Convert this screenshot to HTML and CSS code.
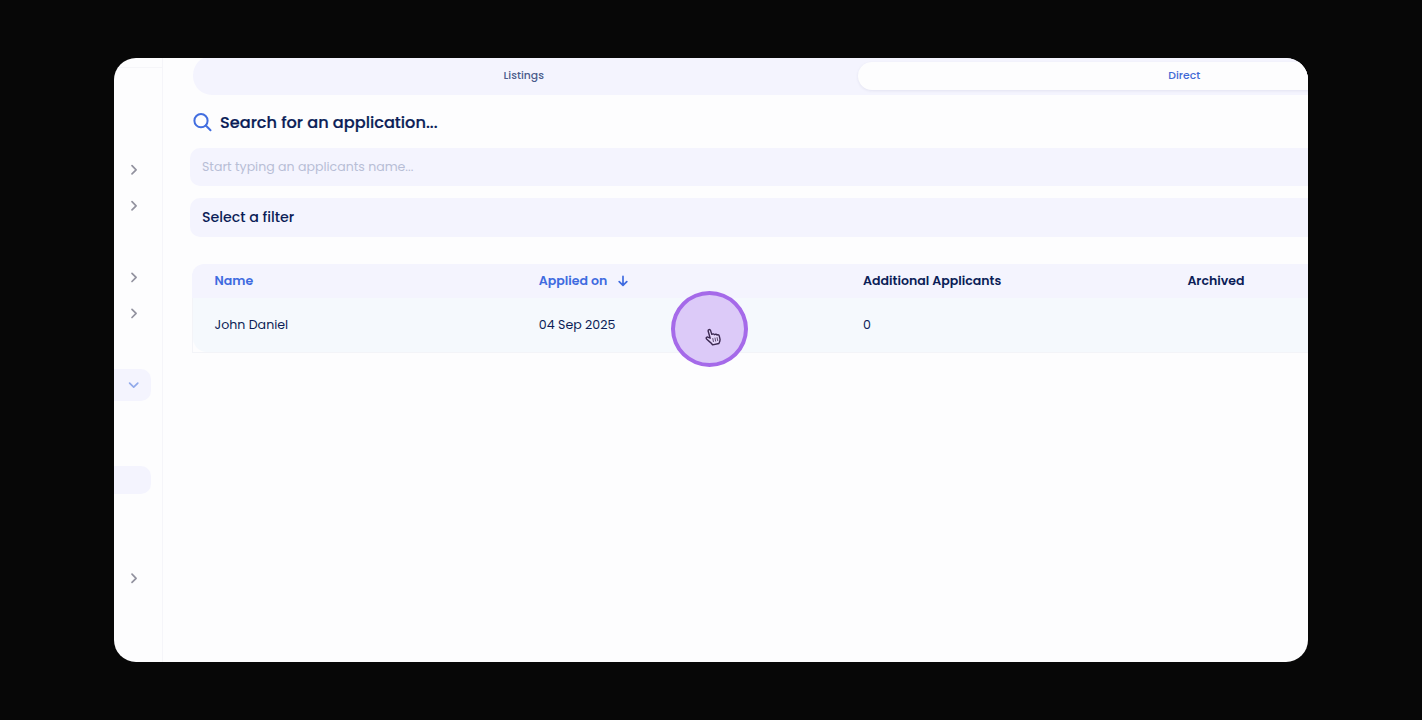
FILE: index.html
```html
<!DOCTYPE html>
<html lang="en">
<head>
  <meta charset="UTF-8">
  <title>Applications</title>
  <link rel="stylesheet" href="styles.css">
</head>
<body>
  <div class="window">
    <nav class="sidebar">
      <div class="side-top"></div>
      <div class="side-item"><svg class="chevron" viewBox="0 0 12 12"><path d="M4 1.7 8.1 5.8 4 9.9"/></svg></div>
      <div class="side-item"><svg class="chevron" viewBox="0 0 12 12"><path d="M4 1.7 8.1 5.8 4 9.9"/></svg></div>
      <div class="side-item"></div>
      <div class="side-item"><svg class="chevron" viewBox="0 0 12 12"><path d="M4 1.3 8.1 5.4 4 9.5"/></svg></div>
      <div class="side-item"><svg class="chevron" viewBox="0 0 12 12"><path d="M4 1.3 8.1 5.4 4 9.5"/></svg></div>
      <div class="side-item"></div>
      <div class="side-item open"><svg class="chevron" viewBox="0 0 12 12"><path d="M1.6 4.2 5.7 8.2 9.8 4.2"/></svg></div>
      <div class="side-item current"></div>
      <div class="side-item last"><svg class="chevron" viewBox="0 0 12 12"><path d="M4 2.2 8.1 6.3 4 10.4"/></svg></div>
    </nav>

    <main class="content">
      <div class="tabs">
        <div class="tab">Listings</div>
        <div class="tab active">Direct</div>
      </div>

      <h1 class="title">
        <svg class="search-icon" viewBox="0 0 20 20"><circle cx="8" cy="8.7" r="6.6"/><path d="M12.8 13.5 17.5 18.2"/></svg>
        <span>Search for an application...</span>
      </h1>

      <div class="field search">Start typing an applicants name...</div>
      <div class="field filter">Select a filter</div>

      <div class="table">
        <div class="row head">
          <div class="cell sort">Name</div>
          <div class="cell sort">Applied on
            <svg class="arrow" viewBox="0 0 10 12"><path d="M5 1.4V10.2M1.2 6.6 5 10.4 8.8 6.6"/></svg>
          </div>
          <div class="cell">Additional Applicants</div>
          <div class="cell">Archived</div>
        </div>
        <div class="body">
          <div class="row record">
            <div class="cell">John Daniel</div>
            <div class="cell">04 Sep 2025</div>
            <div class="cell">0</div>
            <div class="cell"></div>
          </div>
        </div>
      </div>
    </main>

    <div class="click-ring">
      <svg class="hand" viewBox="0 0 16 18"><path d="M5.2 10.2 3.2 3.3C2.8 1.3 5 .9 5.6 2.6L6.8 6.4C8 5.5 9 5.9 9.4 6.7 10.5 5.9 11.5 6.2 11.9 7 13.2 6.5 14 7.1 14.3 8.1L15 11.2C15.2 13 14.5 14.2 13.9 15.5L7.6 16.9C6.2 14.5 3.6 13.2 1.6 11 .5 9.3 2.2 8.5 3.4 9.3Z"/><path class="thin" d="M7.8 10.5 8.4 13.6M10 10 10.6 13.1M12.1 9.6 12.7 12.6"/></svg>
    </div>
  </div>
</body>
</html>
```
FILE: styles.css
```css
* { box-sizing: border-box; }
body { margin: 0; height: 720px; padding: 58px 114px; background: #070707; overflow: hidden; font-family: Poppins, Inter, "Open Sans", sans-serif; color: #0b1d57; }
svg { fill: none; stroke: currentColor; stroke-linecap: round; stroke-linejoin: round; flex: none; display: block; }

.window { position: relative; display: flex; width: 1194px; height: 604px; border-radius: 22px; overflow: hidden; background: #fdfdfe; }

.sidebar { flex: none; width: 49px; border-right: 1px solid #f5f5f9; }
.side-top { height: 10px; margin-bottom: 84px; border-bottom: 1px solid #f6f6f9; }
.side-item { display: flex; align-items: center; width: 37px; height: 36px; padding-left: 14px; color: #92929f; }
.side-item.open { height: 32px; margin-top: 1px; background: #f4f4fe; border-radius: 0 10px 10px 0; color: #91a9ea; }
.side-item.current { height: 28px; margin-top: 65px; background: #f4f4fe; border-radius: 0 10px 10px 0; }
.side-item.last { margin-top: 66px; }
.chevron { width: 12px; height: 12px; stroke-width: 1.7; }

.content { flex: none; width: 1360px; padding-left: 27px; }

.tabs { display: flex; gap: 6px; width: 1328px; height: 39px; margin: -2px 0 0 3px; padding: 6px 4px 5px; border-radius: 19px; background: #f4f4fe; }
.tab { flex: 1; height: 28px; border-radius: 14px; font-size: 10.8px; font-weight: 500; line-height: 27px; text-align: center; color: #4b5c8c; }
.tab.active { margin-left: 1px; background: #fdfdfe; color: #4169d5; padding-right: 6px; box-shadow: 0 1px 3px rgba(40, 40, 90, 0.08); }

.title { display: flex; align-items: center; height: 53px; margin: 0; padding-left: 3px; font-size: 16.15px; font-weight: 500; white-space: nowrap; }
.title span { padding-top: 1px; -webkit-text-stroke: 0.2px currentColor; }
.search-icon { width: 20px; height: 20px; margin-right: 7px; stroke-width: 2; color: #426ee0; }

.field { display: flex; align-items: center; height: 38px; padding: 0 12px; border-radius: 10px; background: #f4f4fe; }
.search { font-size: 12.55px; color: #b8bed6; }
.filter { height: 39px; margin-top: 12px; font-size: 14.2px; font-weight: 500; }

.table { width: 1322px; margin: 27px 0 0 2px; }
.row { display: grid; grid-template-columns: 324.3px 324.3px 324.3px 1fr; align-items: center; padding-left: 22.5px; }
.head { height: 34px; border-radius: 12px 12px 0 0; background: #f4f4fe; font-size: 12.55px; font-weight: 600; }
.body { border: 1px solid #f3f4f8; border-top: 0; }
.record { height: 54px; padding: 0 0 1px 21.5px; border-radius: 0 0 0 14px; background: #f5f9fd; font-size: 12.6px; }
.cell { display: flex; align-items: center; white-space: nowrap; }
.sort { color: #3f6be0; }
.arrow { width: 10px; height: 12px; margin-left: 11px; stroke-width: 1.7; }

/* click marker and pointer */
.click-ring { position: absolute; left: 557px; top: 233px; width: 77px; height: 76px; border: 4px solid #a56ae9; border-radius: 50%; background: #dccaf8; }
.hand { position: absolute; left: 30px; top: 33px; width: 16px; height: 18px; color: #3b2851; stroke-width: 1.4; fill: #e5d6fa; }
.thin { stroke-width: 0.8; }
```
